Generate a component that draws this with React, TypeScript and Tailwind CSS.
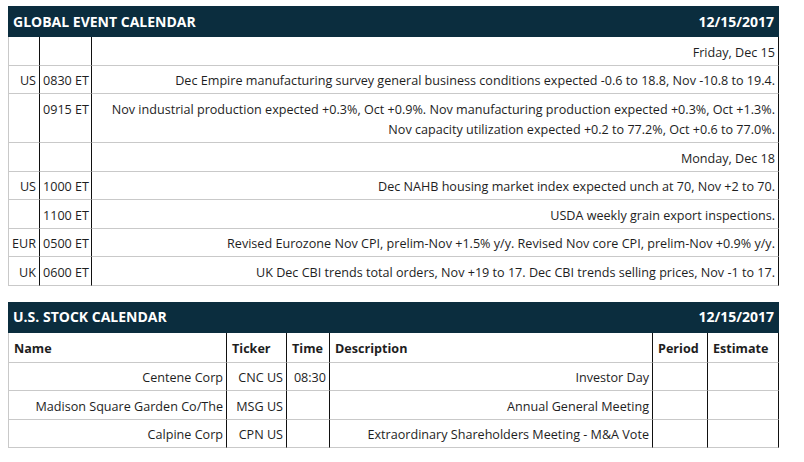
const events = [
  { day: "Friday, Dec 15" },
  { c: "US", t: "0830 ET", d: ["Dec Empire manufacturing survey general business conditions expected -0.6 to 18.8, Nov -10.8 to 19.4."] },
  {
    c: "",
    t: "0915 ET",
    d: [
      "Nov industrial production expected +0.3%, Oct +0.9%. Nov manufacturing production expected +0.3%, Oct +1.3%.",
      "Nov capacity utilization expected +0.2 to 77.2%, Oct +0.6 to 77.0%.",
    ],
  },
  { day: "Monday, Dec 18" },
  { c: "US", t: "1000 ET", d: ["Dec NAHB housing market index expected unch at 70, Nov +2 to 70."] },
  { c: "", t: "1100 ET", d: ["USDA weekly grain export inspections."] },
  { c: "EUR", t: "0500 ET", d: ["Revised Eurozone Nov CPI, prelim-Nov +1.5% y/y. Revised Nov core CPI, prelim-Nov +0.9% y/y."] },
  { c: "UK", t: "0600 ET", d: ["UK Dec CBI trends total orders, Nov +19 to 17. Dec CBI trends selling prices, Nov -1 to 17."] },
];

const stocks = [
  { name: "Centene Corp", ticker: "CNC US", time: "08:30", desc: "Investor Day" },
  { name: "Madison Square Garden Co/The", ticker: "MSG US", time: "", desc: "Annual General Meeting" },
  { name: "Calpine Corp", ticker: "CPN US", time: "", desc: "Extraordinary Shareholders Meeting - M&A Vote" },
];

const first = "border-b border-l border-[#c9c9c9] px-[3px] pt-[5.75px] pb-[1.75px] text-right align-top whitespace-nowrap";
const mid = "border-b border-l border-b-[#c9c9c9] border-l-[#111] px-[3px] pt-[5.75px] pb-[1.75px] text-right align-top whitespace-nowrap";
const last = "border-b border-l border-r border-b-[#c9c9c9] border-l-[#111] border-r-[#111] px-[3px] pt-[5.75px] pb-[1.75px] text-right align-top whitespace-nowrap";
const head = " !text-left !pt-[6.5px] !pb-[2.5px] pl-[5px]";

function Header({ title }: { title: string }) {
  return (
    <div className="flex h-[31px] items-center justify-between bg-[#0b2d3e] px-[5px] text-[14px] font-bold text-white">
      <span>{title}</span>
      <span>12/15/2017</span>
    </div>
  );
}

export default function App() {
  return (
    <div className="bg-white pl-[8px] pt-[6px] text-[12.6px] leading-[20px] text-[#1e1e1e]" style={{ fontFamily: '"Open Sans", sans-serif' }}>
      <div className="w-[771px]">

        {/* Global event calendar */}
        <Header title="GLOBAL EVENT CALENDAR" />
        <table className="w-full table-fixed border-separate border-spacing-0">
          <colgroup>
            <col className="w-[31px]" />
            <col className="w-[52px]" />
            <col />
          </colgroup>
          <tbody>
            {events.map((e, i) =>
              e.day ? (
                <tr key={i}>
                  <td className={first}>&nbsp;</td>
                  <td className={mid}></td>
                  <td className={last}>{e.day}</td>
                </tr>
              ) : (
                <tr key={i}>
                  <td className={first}>{e.c}</td>
                  <td className={mid}>{e.t}</td>
                  <td className={last + (e.d!.length > 1 ? " !pt-[6px] !pb-[2px]" : "")}>
                    {e.d!.map((l, j) => (
                      <div key={j}>{l}</div>
                    ))}
                  </td>
                </tr>
              )
            )}
          </tbody>
        </table>

        {/* U.S. stock calendar */}
        <div className="mt-[16px]">
          <Header title="U.S. STOCK CALENDAR" />
          <table className="w-full table-fixed border-separate border-spacing-0">
            <colgroup>
              <col className="w-[218px]" />
              <col className="w-[60px]" />
              <col className="w-[43px]" />
              <col className="w-[323px]" />
              <col className="w-[55px]" />
              <col />
            </colgroup>
            <thead>
              <tr className="font-bold">
                <td className={first + head}>Name</td>
                <td className={mid + head}>Ticker</td>
                <td className={mid + head}>Time</td>
                <td className={mid + head}>Description</td>
                <td className={mid + head}>Period</td>
                <td className={last + head}>Estimate</td>
              </tr>
            </thead>
            <tbody>
              {stocks.map((s) => (
                <tr key={s.ticker}>
                  <td className={first}>{s.name}</td>
                  <td className={mid}>{s.ticker}</td>
                  <td className={mid}>{s.time}</td>
                  <td className={mid}>{s.desc}</td>
                  <td className={mid}></td>
                  <td className={last}></td>
                </tr>
              ))}
            </tbody>
          </table>
        </div>

      </div>
    </div>
  );
}
